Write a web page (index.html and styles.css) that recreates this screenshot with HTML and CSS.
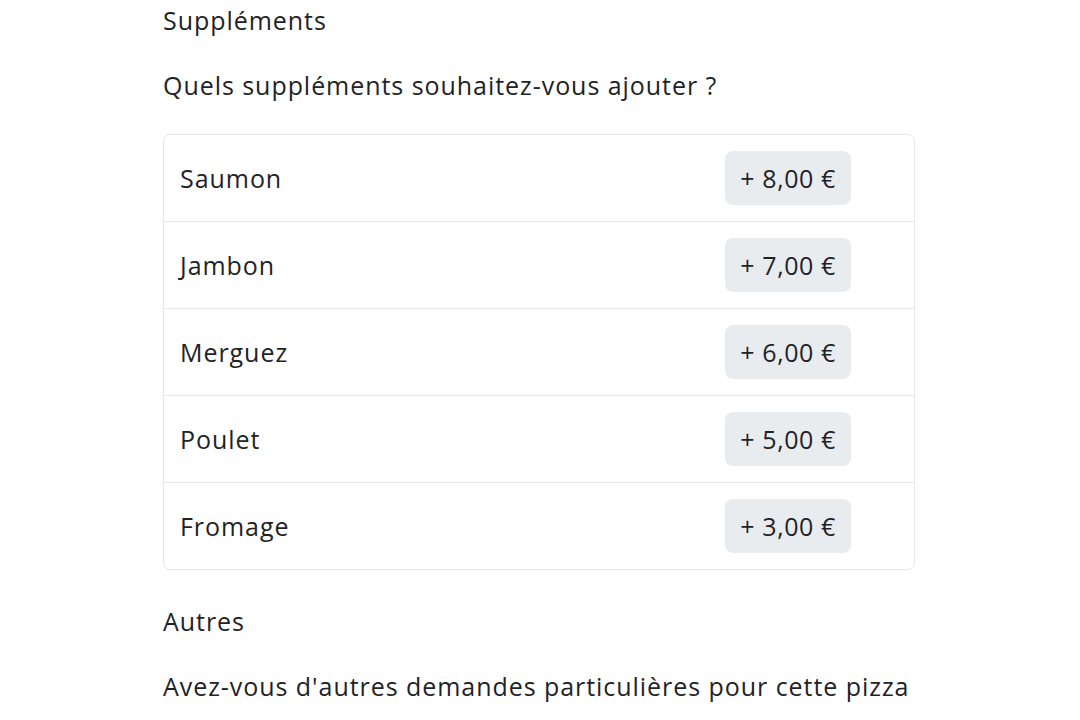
FILE: index.html
```html
<!DOCTYPE html>
<html lang="fr">
<head>
<meta charset="utf-8">
<title>Suppléments</title>
<link rel="stylesheet" href="styles.css">
</head>
<body>
<main class="page">
  <h2 class="section-title">Suppléments</h2>
  <p class="question">Quels suppléments souhaitez-vous ajouter ?</p>
  <ul class="options">
    <li class="option"><span class="option-name">Saumon</span><span class="price">+ 8,00 €</span></li>
    <li class="option"><span class="option-name">Jambon</span><span class="price">+ 7,00 €</span></li>
    <li class="option"><span class="option-name">Merguez</span><span class="price">+ 6,00 €</span></li>
    <li class="option"><span class="option-name">Poulet</span><span class="price">+ 5,00 €</span></li>
    <li class="option"><span class="option-name">Fromage</span><span class="price">+ 3,00 €</span></li>
  </ul>
  <h2 class="section-title section-gap">Autres</h2>
  <p class="question">Avez-vous d'autres demandes particulières pour cette pizza</p>
</main>
</body>
</html>
```
FILE: styles.css
```css
* { box-sizing: border-box; }
html, body { margin: 0; padding: 0; background: #ffffff; }
body {
  font-family: "Open Sans", "Lato", sans-serif;
  color: #1f2327;
  font-size: 25px;
  line-height: 36px;
  letter-spacing: 0.95px;
}
.page {
  width: 752px;
  margin-left: 163px;
  padding-top: 2px;
}
.section-title {
  margin: 0;
  font-size: 25px;
  font-weight: 400;
  line-height: 36px;
}
.question {
  margin: 29px 0 31px;
  line-height: 36px;
}
.options {
  list-style: none;
  margin: 0;
  padding: 0;
  border: 1px solid #e6e8eb;
  border-radius: 7px;
}
.option {
  display: flex;
  align-items: center;
  justify-content: space-between;
  padding: 16px 63px 16px 16px;
  border-top: 1px solid #e6e8eb;
}
.option:first-child { border-top: none; }
.price {
  background: #e9ecef;
  border-radius: 8px;
  padding: 9px 15px;
  line-height: 36px;
  letter-spacing: 0.6px;
}
.section-gap { margin-top: 33px; }
```
